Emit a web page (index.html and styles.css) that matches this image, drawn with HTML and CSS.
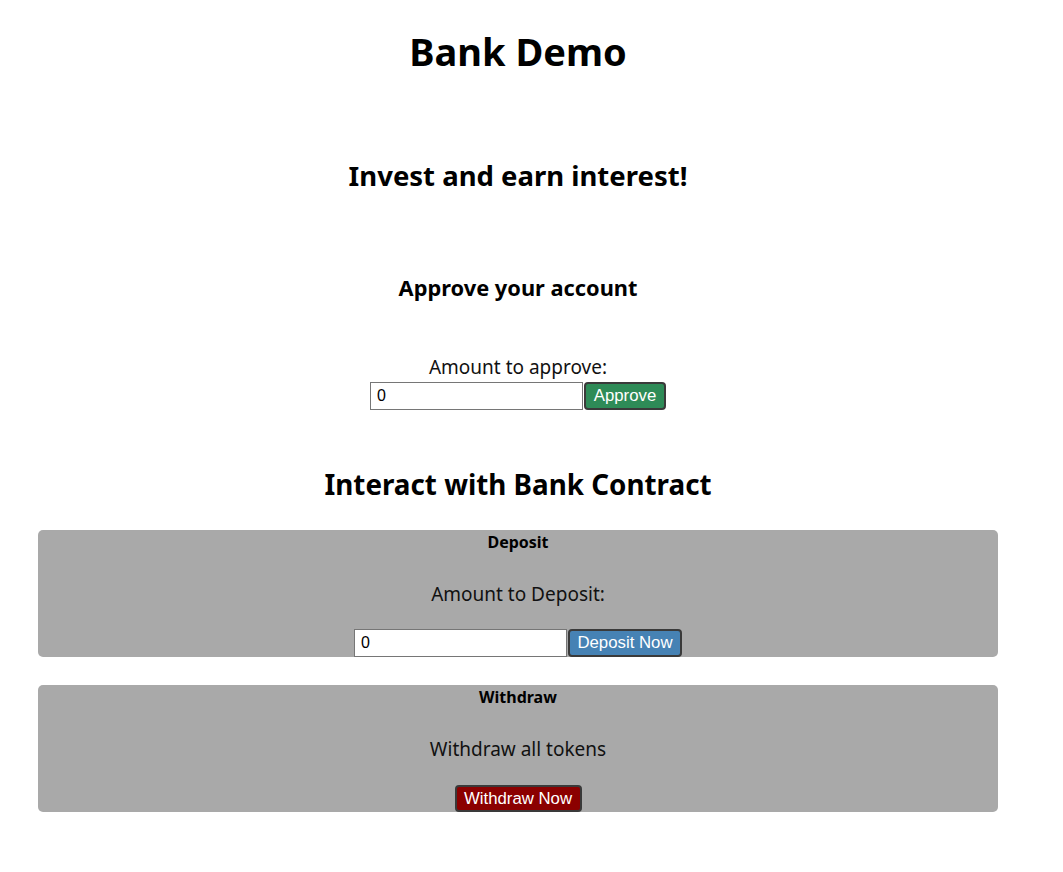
FILE: index.html
```html
<!DOCTYPE html>
<html lang="en">
<head>
<meta charset="utf-8">
<title>Bank Demo</title>
<link rel="stylesheet" href="styles.css">
</head>
<body>
<div class="app">
  <h1 class="title">Bank Demo</h1>
  <h2 class="subtitle">Invest and earn interest!</h2>
  <h3 class="section-title">Approve your account</h3>
  <div class="field">
    <p class="label">Amount to approve:</p>
    <div class="row">
      <input class="amount" type="text" value="0">
      <button class="btn btn-approve">Approve</button>
    </div>
  </div>
  <h2 class="contract-title">Interact with Bank Contract</h2>
  <div class="panel">
    <h4 class="panel-title">Deposit</h4>
    <p class="panel-text">Amount to Deposit:</p>
    <div class="row">
      <input class="amount" type="text" value="0">
      <button class="btn btn-deposit">Deposit Now</button>
    </div>
  </div>
  <div class="panel">
    <h4 class="panel-title">Withdraw</h4>
    <p class="panel-text">Withdraw all tokens</p>
    <div class="row">
      <button class="btn btn-withdraw">Withdraw Now</button>
    </div>
  </div>
</div>
</body>
</html>
```
FILE: styles.css
```css
html, body {
  margin: 0;
  padding: 0;
  background: #ffffff;
}
body {
  font-family: "Noto Sans", "Open Sans", sans-serif;
  color: #000;
}
.app {
  width: 1020px;
  margin-left: 8px;
  text-align: center;
  padding-top: 29px;
}
.title {
  font-size: 38px;
  line-height: 44px;
  font-weight: 700;
  margin: 0;
}
.subtitle {
  font-size: 27.5px;
  line-height: 34px;
  font-weight: 700;
  margin: 86px 0 0;
}
.section-title {
  font-size: 21.8px;
  line-height: 28px;
  font-weight: 700;
  margin: 81px 0 0;
}
.field {
  margin-top: 53px;
}
.label {
  font-size: 19px;
  line-height: 24px;
  margin: 0;
  color: #111;
}
.row {
  display: flex;
  justify-content: center;
  align-items: center;
  margin-top: 3px;
}
.amount {
  width: 213px;
  height: 28px;
  box-sizing: border-box;
  border: 1px solid #767676;
  border-radius: 0;
  padding: 1px 6px;
  font-family: "Liberation Sans", Arial, sans-serif;
  font-size: 16px;
  color: #000;
  background: #fff;
  margin: 0;
}
.btn {
  box-sizing: border-box;
  height: 28px;
  border: 2px solid #3a3a3a;
  border-radius: 4px;
  color: #fff;
  font-family: "Liberation Sans", Arial, sans-serif;
  font-size: 16.8px;
  padding: 0 4px;
  margin: 0 0 0 1px;
}
.btn-approve { background: #2e8b57; width: 82px; }
.btn-deposit { background: #4682b4; width: 114px; }
.btn-withdraw { background: #8b0000; width: 127px; height: 27px; margin: 0; }
.contract-title {
  font-size: 27.8px;
  line-height: 34px;
  font-weight: 700;
  margin: 57px 0 0;
}
.panel {
  width: 960px;
  margin: 29px auto 0;
  background: #a9a9a9;
  border-radius: 5px;
  height: 127px;
  padding-top: 2px;
  box-sizing: border-box;
  display: flex;
  flex-direction: column;
}
.panel + .panel {
  margin-top: 28px;
}
.panel-title {
  font-size: 16px;
  line-height: 20px;
  font-weight: 700;
  margin: 0;
}
.panel-text {
  font-size: 19px;
  line-height: 24px;
  margin: 30px 0 0;
  color: #111;
}
.panel .row {
  margin-top: auto;
}
```
